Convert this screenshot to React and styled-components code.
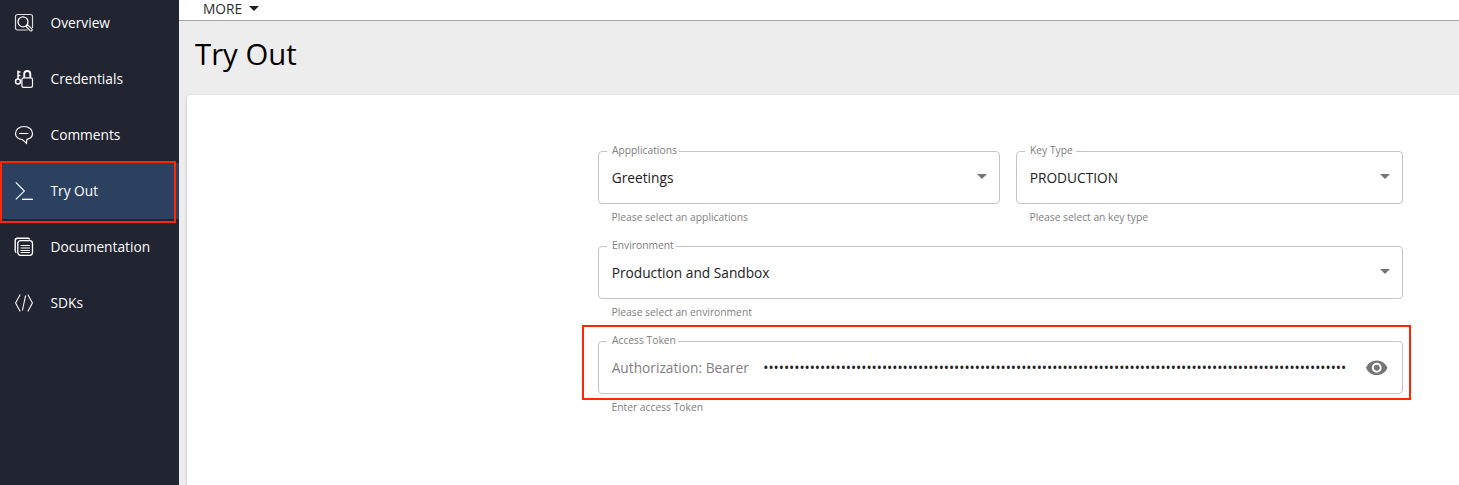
import React from 'react';
import styled, { createGlobalStyle } from 'styled-components';

const GlobalStyle = createGlobalStyle`
  *, *::before, *::after { box-sizing: border-box; }
  body {
    margin: 0;
    overflow: hidden;
    background: #ededed;
    font-family: "Open Sans", "Noto Sans", sans-serif;
    color: #000;
  }
`;

const Page = styled.div`
  display: flex;
  width: 100%;
  height: 485px;
  overflow: hidden;
`;

const Sidebar = styled.nav`
  flex: none;
  display: flex;
  flex-direction: column;
  width: 179px;
  padding-top: 0;
  background: #212431;
`;

const NavList = styled.div`
  display: flex;
  flex-direction: column;
  margin-top: -5px;
`;

const NavItem = styled.div`
  position: relative;
  display: flex;
  align-items: center;
  height: 56px;
  padding-left: 14px;
  gap: 16.5px;
  color: #fff;
  background: ${(p) => (p.$active ? '#2c4160' : 'transparent')};
  font-size: 13.72px;
  line-height: 20px;
  white-space: nowrap;

  svg { flex: none; display: block; overflow: visible; }
`;

const Highlight = styled.div`
  position: absolute;
  top: ${(p) => p.$top}px;
  left: ${(p) => p.$left}px;
  width: ${(p) => p.$width}px;
  height: ${(p) => p.$height}px;
  border: 2px solid #ff2600;
  pointer-events: none;
  z-index: 1;
`;

const Main = styled.main`
  flex: 1;
  display: flex;
  flex-direction: column;
  min-width: 0;
`;

const TopBar = styled.div`
  display: flex;
  align-items: center;
  height: 21px;
  padding: 0 0 3px 24px;
  background: #fff;
  border-bottom: 1px solid #a3a6a3;
  color: #2b2b2b;
  font-size: 13.72px;
  line-height: 18px;
`;

const Caret = styled.span`
  width: 0;
  height: 0;
  margin-left: 7px;
  border: 5px solid transparent;
  border-top-color: ${(p) => p.$color || '#757575'};
  border-bottom: 0;
`;

const Title = styled.h1`
  margin: 0;
  height: 74px;
  padding: 13px 0 0 16px;
  font-size: 29.3px;
  font-weight: 400;
  line-height: 40px;
`;

const Card = styled.section`
  flex: 1;
  margin-left: 8px;
  padding: 56px 0 0 411px;
  background: #fff;
  border-radius: 4px 0 0 0;
  box-shadow: 0 1px 3px rgba(0, 0, 0, 0.25);
`;

const Form = styled.div`
  display: flex;
  flex-direction: column;
  width: 805px;
`;

const FormRow = styled.div`
  position: relative;
  display: grid;
  grid-template-columns: ${(p) => p.$columns || '1fr'};
  column-gap: 16px;
  height: 95px;
`;

const FieldWrap = styled.div`
  min-width: 0;
`;

const Outline = styled.fieldset`
  display: block;
  height: 59px;
  min-width: 0;
  margin: -6px 0 0;
  padding: 0 12px 0 8px;
  border: 1px solid #c4c4c4;
  border-radius: 4px;
`;

const Legend = styled.legend`
  height: 12px;
  padding: 0 ${(p) => p.$end || 2}px 0 5px;
  color: #808080;
  font-size: 10.29px;
  line-height: 11px;
  white-space: nowrap;
`;

const Control = styled.div`
  display: flex;
  align-items: center;
  justify-content: space-between;
  height: 40px;
  padding-left: 4.7px;
  color: #212121;
  font-size: 13.72px;
  white-space: nowrap;

  ${Caret} { margin: 0 0 1px; }
`;

const Prefix = styled.span`
  width: 151.6px;
  color: #808080;
`;

const Secret = styled.span`
  flex: 1;
`;

const Helper = styled.p`
  margin: 6px 0 0 13.5px;
  color: #808080;
  font-size: 10.29px;
  line-height: 14px;
`;

const Glyph = ({ children }) => (
  <svg width="20" height="20" viewBox="0 0 20 20" fill="none" stroke="#fff" strokeWidth="1.1">
    {children}
  </svg>
);

const OverviewIcon = () => (
  <Glyph>
    <path d="M13.5 17H3.5a2 2 0 0 1-2-2V3.5a2 2 0 0 1 2-2h13a2 2 0 0 1 2 2v11.5" stroke="#ddd" strokeWidth="1.2" />
    <circle cx="9" cy="8.8" r="5" strokeWidth="1.3" />
    <path d="M12 13.4l1.6-1.6 4.2 4a1.2 1.2 0 0 1-1.7 1.8z" strokeWidth="1.1" />
  </Glyph>
);

const CredentialsIcon = () => (
  <Glyph>
    <rect x="7.9" y="8.8" width="10.6" height="9.6" rx="1.6" strokeWidth="1.2" />
    <path d="M10.2 8.6V5a3 3 0 0 1 6.1 0v3.6" strokeWidth="1.9" />
    <circle cx="4" cy="12.6" r="2.5" strokeWidth="1.5" />
    <path d="M4 10V1.4M4 3h2.5M4 6.6h2.5" strokeWidth="1.5" />
  </Glyph>
);

const CommentsIcon = () => (
  <Glyph>
    <path d="M8.3 14.5C4.3 14.3 1.5 11.6 1.5 8.4c0-3.8 3.8-6.9 8.5-6.9s8.5 3.1 8.5 6.9c0 2.8-2.2 5.1-5.6 6l-.4 3.8z" strokeWidth="1.2" />
    <path d="M5 8.5h9.5" />
  </Glyph>
);

const TryOutIcon = () => (
  <Glyph>
    <path d="M1.8 1.3l8.5 8.8-8.5 8.3" strokeWidth="1.2" />
    <path d="M8 18.3h11" strokeWidth="1.3" />
  </Glyph>
);

const DocumentationIcon = () => (
  <Glyph>
    <path d="M2.3 15.7c-.8-.4-1.1-1-1.1-2V3.5c0-1.5.8-2.2 2.2-2.2h10.2c1 0 1.7.3 2.1 1" strokeWidth="1.4" />
    <rect x="3.8" y="3.6" width="14.7" height="14.8" rx="2.8" strokeWidth="1.3" />
    <path d="M6.5 8.5h9.4M6.5 11h9.4M6.5 13.5h9.4M6.5 15.5h9.4" strokeWidth="1" />
  </Glyph>
);

const SdkIcon = () => (
  <Glyph>
    <path d="M6.2 1.5L1.6 10l4.6 8.5M13.8 1.5l4.6 8.5-4.6 8.5M11.6 2.5l-3.2 15" />
  </Glyph>
);

const EyeSvg = styled.svg`
  flex: none;
  width: 23.5px;
  height: 23.5px;
  margin: 1px 1.7px 0 0;
  fill: #757575;
`;

const EyeIcon = () => (
  <EyeSvg viewBox="0 0 24 24">
    <path d="M12 4.5C7 4.5 2.73 7.61 1 12c1.73 4.39 6 7.5 11 7.5s9.27-3.11 11-7.5c-1.73-4.39-6-7.5-11-7.5zM12 17c-2.76 0-5-2.24-5-5s2.24-5 5-5 5 2.24 5 5-2.24 5-5 5zm0-8c-1.66 0-3 1.34-3 3s1.34 3 3 3 3-1.34 3-3-1.34-3-3-3z" />
  </EyeSvg>
);

const SelectField = ({ label, value, helper, legendEnd }) => (
  <FieldWrap>
    <Outline>
      <Legend $end={legendEnd}>{label}</Legend>
      <Control>
        {value}
        <Caret />
      </Control>
    </Outline>
    <Helper>{helper}</Helper>
  </FieldWrap>
);

const navItems = [
  { label: 'Overview', Icon: OverviewIcon },
  { label: 'Credentials', Icon: CredentialsIcon },
  { label: 'Comments', Icon: CommentsIcon },
  { label: 'Try Out', Icon: TryOutIcon, active: true },
  { label: 'Documentation', Icon: DocumentationIcon },
  { label: 'SDKs', Icon: SdkIcon },
];

export default function App() {
  return (
    <>
      <GlobalStyle />
      <Page>
        <Sidebar>
          <NavList>
            {navItems.map(({ label, Icon, active }) => (
              <NavItem key={label} $active={active}>
                <Icon />
                {label}
                {active && <Highlight $top={-2} $left={0} $width={176} $height={62} />}
              </NavItem>
            ))}
          </NavList>
        </Sidebar>
        <Main>
          <TopBar>
            MORE
            <Caret $color="#212121" />
          </TopBar>
          <Title>Try Out</Title>
          <Card>
            <Form>
              <FormRow $columns="402px 387px">
                <SelectField label="Appplications" value="Greetings" helper="Please select an applications" />
                <SelectField label="Key Type" value="PRODUCTION" helper="Please select an key type" legendEnd={3} />
              </FormRow>
              <FormRow>
                <SelectField label="Environment" value="Production and Sandbox" helper="Please select an environment" />
              </FormRow>
              <FormRow>
                <FieldWrap>
                  <Outline>
                    <Legend>Access Token</Legend>
                    <Control>
                      <Prefix>Authorization: Bearer</Prefix>
                      <Secret>{'•'.repeat(113)}</Secret>
                      <EyeIcon />
                    </Control>
                  </Outline>
                  <Helper>Enter access Token</Helper>
                </FieldWrap>
                <Highlight $top={-16} $left={-16} $width={829} $height={75} />
              </FormRow>
            </Form>
          </Card>
        </Main>
      </Page>
    </>
  );
}
